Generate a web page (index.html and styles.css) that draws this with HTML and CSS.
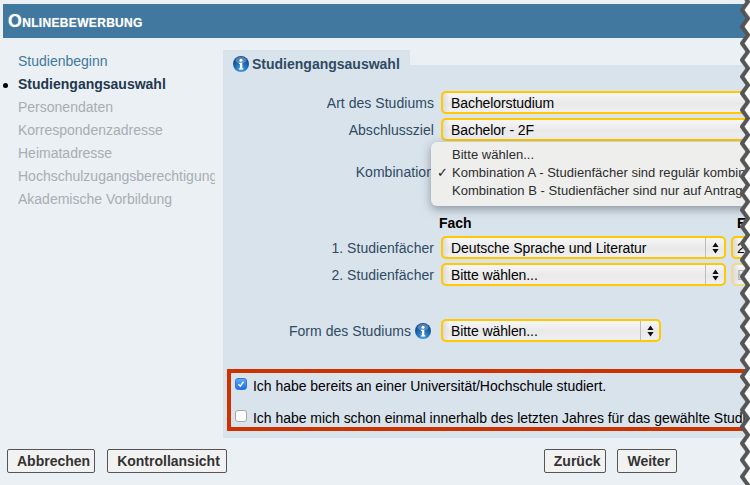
FILE: index.html
```html
<!DOCTYPE html>
<html lang="de">
<head>
<meta charset="utf-8">
<title>Onlinebewerbung</title>
<link rel="stylesheet" href="styles.css">
</head>
<body>
<svg class="defs" width="0" height="0" aria-hidden="true">
  <defs>
    <radialGradient id="infoGrad" cx="50%" cy="85%" r="75%">
      <stop offset="0" stop-color="#4aa3e6"/>
      <stop offset="0.6" stop-color="#1a67b0"/>
      <stop offset="1" stop-color="#0d4a8c"/>
    </radialGradient>
    <symbol id="info" viewBox="0 0 16 16">
      <circle cx="8" cy="8" r="8" fill="url(#infoGrad)"/>
      <ellipse cx="8" cy="4.2" rx="5.5" ry="3.4" fill="#fff" opacity=".28"/>
      <circle cx="8" cy="4.2" r="1.5" fill="#fff"/>
      <path d="M5.9 6.7h3.4v5.6h1v1.2H5.9v-1.2h1V7.9h-1z" fill="#fff"/>
    </symbol>
    <symbol id="arrows" viewBox="0 0 7 12">
      <path d="M3.5 0.5 6.6 5H.4zM3.5 11.5.4 7h6.2z" fill="#111"/>
    </symbol>
    <pattern id="zig" width="14" height="16.667" patternUnits="userSpaceOnUse" y="1.667">
      <path d="M8 0 2 8.333 8 16.667h6V0z" fill="#fff"/>
      <path d="M2 -8.333 8 0 2 8.333 8 16.667 2 25" fill="none" stroke="#555" stroke-width="4"/>
    </pattern>
  </defs>
</svg>

<header class="banner">Onlinebewerbung</header>

<div class="layout">
  <nav class="steps">
    <a class="step step-done">Studienbeginn</a>
    <a class="step step-current">Studiengangsauswahl</a>
    <a class="step">Personendaten</a>
    <a class="step">Korrespondenzadresse</a>
    <a class="step">Heimatadresse</a>
    <a class="step">Hochschulzugangsberechtigung</a>
    <a class="step">Akademische Vorbildung</a>
  </nav>

  <main class="panel">
    <div class="tab">
      <h2 class="tab-title"><svg class="info"><use href="#info"/></svg>Studiengangsauswahl</h2>
    </div>
    <div class="panel-body">
      <div class="form">
        <div class="row">
          <label class="label">Art des Studiums</label>
          <div class="select select-wide"><span class="select-text">Bachelorstudium</span></div>
        </div>
        <div class="row">
          <label class="label">Abschlussziel</label>
          <div class="select select-wide"><span class="select-text">Bachelor - 2F</span></div>
        </div>
        <div class="row row-combo">
          <label class="label">Kombination</label>
          <div class="menu">
            <div class="menu-item">Bitte wählen...</div>
            <div class="menu-item menu-item-checked">Kombination A - Studienfächer sind regulär kombinierbar</div>
            <div class="menu-item">Kombination B - Studienfächer sind nur auf Antrag kombinierbar</div>
          </div>
        </div>
        <div class="row row-head">
          <span class="label"></span>
          <div class="pair">
            <strong class="col-head col-fach">Fach</strong>
            <strong class="col-head">E</strong>
          </div>
        </div>
        <div class="row">
          <label class="label">1. Studienfächer</label>
          <div class="pair">
            <div class="select select-fach"><span class="select-text">Deutsche Sprache und Literatur</span><span class="stepper"><svg class="arrows"><use href="#arrows"/></svg></span></div>
            <div class="select select-side"><span class="select-text">2</span></div>
          </div>
        </div>
        <div class="row">
          <label class="label">2. Studienfächer</label>
          <div class="pair">
            <div class="select select-fach"><span class="select-text">Bitte wählen...</span><span class="stepper"><svg class="arrows"><use href="#arrows"/></svg></span></div>
            <div class="select select-side select-off"><span class="select-text">B</span></div>
          </div>
        </div>
        <div class="row row-form">
          <label class="label label-info">Form des Studiums <svg class="info"><use href="#info"/></svg></label>
          <div class="select select-form"><span class="select-text">Bitte wählen...</span><span class="stepper"><svg class="arrows"><use href="#arrows"/></svg></span></div>
        </div>
      </div>

      <section class="alert">
        <div class="check-row">
          <span class="check check-on"><svg viewBox="0 0 12 12" class="tick"><path d="M3 6.2 5.2 8.6 9 3.2" fill="none" stroke="#fff" stroke-width="1.8"/></svg></span>
          <span class="check-text">Ich habe bereits an einer Universität/Hochschule studiert.</span>
        </div>
        <div class="check-row">
          <span class="check"></span>
          <span class="check-text">Ich habe mich schon einmal innerhalb des letzten Jahres für das gewählte Studienfach beworben.</span>
        </div>
      </section>
    </div>
  </main>
</div>

<footer class="actions">
  <button class="btn">Abbrechen</button>
  <button class="btn btn-review">Kontrollansicht</button>
  <button class="btn btn-back">Zurück</button>
  <button class="btn btn-next">Weiter</button>
</footer>

<svg class="torn" width="14" height="485" aria-hidden="true"><rect width="14" height="485" fill="url(#zig)"/></svg>
</body>
</html>
```
FILE: styles.css
```css
html, body {
  margin: 0;
  padding: 0;
}
body {
  position: relative;
  width: 750px;
  height: 485px;
  overflow: hidden;
  background: #ebf0f4;
  font-family: "Liberation Sans", Arial, sans-serif;
  font-size: 14px;
  color: #2f4a63;
}
.defs {
  position: absolute;
}
.banner {
  box-sizing: border-box;
  margin: 4px 0 0 3px;
  height: 34px;
  padding-left: 5px;
  background: #41789f;
  color: #fff;
  font-size: 17.8px;
  font-weight: bold;
  font-variant: small-caps;
  letter-spacing: .33px;
  line-height: 35px;
  text-shadow: 0 0 1px rgba(255, 255, 255, .5);
}
.layout {
  display: grid;
  grid-template-columns: 223px 560px;
  margin-top: 12px;
}
.steps {
  display: flex;
  flex-direction: column;
  box-sizing: border-box;
  width: 215px;
  padding-left: 18px;
}
.step {
  position: relative;
  width: 197px;
  height: 23px;
  overflow: hidden;
  line-height: 23px;
  white-space: nowrap;
  color: #a8adb3;
}
.step-done {
  color: #41789f;
}
.step-current {
  overflow: visible;
  font-weight: bold;
  color: #23384d;
}
.step-current::before {
  content: "";
  position: absolute;
  left: -15px;
  top: 10px;
  width: 5px;
  height: 5px;
  border-radius: 50%;
  background: #000;
}
.tab {
  box-sizing: border-box;
  width: 187px;
  height: 15px;
  padding: 6px 0 0 10px;
  background: #d9e3ec;
}
.tab-title {
  display: flex;
  align-items: center;
  gap: 3px;
  height: 16px;
  margin: 0;
  font-size: 14px;
  font-weight: bold;
  white-space: nowrap;
  color: #2f4a63;
}
.info {
  flex: none;
  width: 16px;
  height: 16px;
}
.panel-body {
  box-sizing: border-box;
  height: 373px;
  padding: 26px 0 0 4px;
  background: #d9e3ec;
}
.form {
  display: flex;
  flex-direction: column;
  gap: 4px;
}
.row {
  display: flex;
  align-items: center;
  gap: 7px;
  height: 23px;
}
.label {
  flex: none;
  width: 207px;
  text-align: right;
  white-space: nowrap;
  letter-spacing: .04px;
}
.label-info {
  display: flex;
  justify-content: flex-end;
  align-items: center;
  gap: 4px;
  width: 204px;
  margin-right: 3px;
}
.row-combo {
  position: relative;
  margin-top: 15px;
  margin-bottom: 27px;
}
.row-head {
  height: 18px;
}
.row-form {
  margin-top: 29px;
}
.select {
  box-sizing: border-box;
  display: flex;
  align-items: center;
  flex: none;
  height: 23px;
  border: 2px solid #ffc800;
  border-radius: 5px;
  background: linear-gradient(90deg, #dcdcdc, rgba(220, 220, 220, 0) 6px), linear-gradient(#f6f6f6, #e9e9e9 55%, #f0f0f0);
  color: #000;
  overflow: hidden;
}
.select-text {
  flex: 1;
  padding-left: 8px;
  white-space: nowrap;
  font-size: 14px;
  letter-spacing: -.08px;
}
.select-wide {
  width: 400px;
}
.select-fach {
  width: 285px;
}
.select-side {
  width: 60px;
}
.select-side .select-text {
  padding-left: 4px;
}
.select-off {
  border-color: #f3d98a;
  color: #b0b0b0;
}
.select-form {
  width: 220px;
}
.stepper {
  flex: none;
  display: flex;
  align-items: center;
  justify-content: center;
  width: 18px;
  height: 100%;
  border-left: 1px solid #bdbdbd;
}
.arrows {
  width: 7px;
  height: 12px;
}
.pair {
  display: flex;
  gap: 5px;
  align-items: center;
}
.col-head {
  color: #000;
  font-size: 14px;
}
.col-fach {
  width: 293px;
  margin-left: -2px;
}
.menu {
  position: absolute;
  left: 204px;
  top: -18px;
  box-sizing: border-box;
  width: 500px;
  height: 64px;
  padding: 4px 0;
  border-radius: 6px;
  background: #eeeeec;
  box-shadow: 0 3px 10px rgba(60, 70, 80, .5);
  color: #2c2c2c;
  font-size: 13px;
  letter-spacing: .03px;
}
.menu-item {
  position: relative;
  height: 18px;
  padding-left: 21px;
  line-height: 18px;
  white-space: nowrap;
}
.menu-item-checked::before {
  content: "✓";
  position: absolute;
  left: 6px;
  top: 0;
  font-family: "DejaVu Sans", sans-serif;
  font-size: 13px;
  font-weight: bold;
  color: #222;
}
.alert {
  box-sizing: border-box;
  width: 540px;
  height: 62px;
  margin-top: 27px;
  padding: 5px 0 0 4px;
  border: 4px solid #cc3300;
  color: #000;
}
.check-row {
  display: flex;
  gap: 6px;
  height: 32px;
  white-space: nowrap;
}
.check {
  flex: none;
  box-sizing: border-box;
  width: 12px;
  height: 12px;
  border: 1px solid #a9a9a9;
  border-radius: 3px;
  background: #fff;
}
.check-on {
  border-color: #2f7be0;
  background: linear-gradient(#62a8f7, #1f6fe6);
}
.tick {
  display: block;
  width: 10px;
  height: 10px;
}
.check-text {
  line-height: 17px;
  font-size: 14px;
  letter-spacing: -.03px;
}
.actions {
  display: flex;
  gap: 12px;
  margin-top: 11px;
  padding-left: 7px;
}
.btn {
  box-sizing: border-box;
  height: 24px;
  padding: 0 4px 0 9px;
  border: 1px solid #555;
  border-radius: 2px;
  background: #f2f2f2;
  color: #333;
  font-family: "Liberation Sans", Arial, sans-serif;
  font-size: 14px;
  font-weight: bold;
}
.btn-review {
  padding-right: 6px;
}
.btn-back {
  margin-left: 305px;
  padding-right: 5px;
}
.btn-next {
  margin-left: -1px;
  padding-right: 6px;
}
.torn {
  position: absolute;
  right: -4px;
  top: 0;
}
```
